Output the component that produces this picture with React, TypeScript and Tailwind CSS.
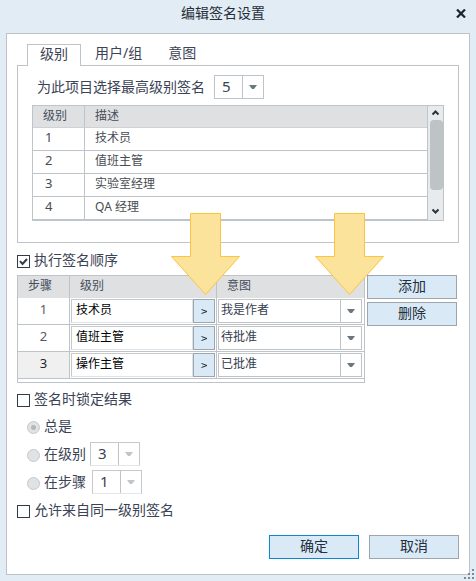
// App.tsx
import React from 'react';

const levels = [
  { id: 1, name: '技术员' },
  { id: 2, name: '值班主管' },
  { id: 3, name: '实验室经理' },
  { id: 4, name: 'QA 经理' },
];

const steps = [
  { id: 1, level: '技术员', intent: '我是作者' },
  { id: 2, level: '值班主管', intent: '待批准' },
  { id: 3, level: '操作主管', intent: '已批准' },
];

const Caret: React.FC<{ className: string }> = ({ className }) => (
  <svg width="8" height="4" viewBox="0 0 8 4" className={className}>
    <path d="M0 0h8L5 4H3z" fill="currentColor" />
  </svg>
);

interface NumberSelectProps {
  value: number;
  disabled?: boolean;
}

const NumberSelect: React.FC<NumberSelectProps> = ({ value, disabled }) => (
  <div
    className={
      disabled
        ? 'flex h-6 w-[50px] border border-[#c6cacd] border-b-[#e4e6e8] bg-white'
        : 'flex h-6 w-[50px] border border-[#bec4c7] bg-white'
    }
  >
    <span className="w-[27px] pl-[7px] text-[15px] leading-[21px]">{value}</span>
    <span className="flex flex-1 items-center justify-center border-l border-[#bec4c7]">
      <Caret className={disabled ? 'text-[#c0c5c9]' : 'text-[#6b777e]'} />
    </span>
  </div>
);

const Checkbox: React.FC<{ checked?: boolean; label: string }> = ({ checked, label }) => (
  <label className="flex h-[13px] items-center">
    <span className="flex size-[13px] items-center justify-center border border-[#343b48] bg-white">
      {checked && (
        <svg width="9" height="8" viewBox="0 0 9 8">
          <path d="M1 3.2 3.5 6 8 1" fill="none" stroke="#343b48" strokeWidth="2" />
        </svg>
      )}
    </span>
    <span className="ml-1 -mt-[3px] text-[14px] leading-4">{label}</span>
  </label>
);

const Radio: React.FC<{ checked?: boolean; label: string }> = ({ checked, label }) => (
  <label className="flex h-[13px] items-center">
    <span className="flex size-[13px] items-center justify-center rounded-full border border-[#c5c9cc] bg-[#e0e2e4]">
      {checked && <span className="size-[5px] rounded-full bg-[#b4b8bb]" />}
    </span>
    <span className="ml-1 -mt-[4px] text-[14px] leading-4">{label}</span>
  </label>
);

const Button: React.FC<{ primary?: boolean; children: React.ReactNode }> = ({ primary, children }) => (
  <button
    className={
      primary
        ? 'h-6 w-[90px] border border-[#0f87d0] bg-[#d9eaf6] pb-[2px] text-[14px] leading-[20px] text-[#242e3c]'
        : 'h-6 w-[90px] border border-[#9da6af] bg-[#d9eaf6] pb-[2px] text-[14px] leading-[20px] text-[#242e3c]'
    }
  >
    {children}
  </button>
);

const Arrow: React.FC<{ className: string }> = ({ className }) => (
  <svg width="71" height="83" viewBox="0 0 71 83" className={className}>
    <path d="M20.5.5h30v43h19L35.5 81.5 1.5 43.5h19z" fill="#fce39b" stroke="#fcc43f" />
  </svg>
);

const LevelTable = () => (
  <div className="ml-[14px] mt-[6px] flex h-[116px] w-[412px] border border-[#bec4c7] text-[12px] text-[#484c52]">
    <div className="w-[394px]">
      <div className="flex h-[22px] border-b border-[#cfd2d4] bg-[#dfe0e2] text-[#454c5b]">
        <span className="w-[52px] border-r border-[#bec4c7] pl-[10px] leading-[19px]">级别</span>
        <span className="pl-[10px] leading-[19px]">描述</span>
      </div>
      {levels.map((level) => (
        <div key={level.id} className="flex h-[23px] border-b border-[#bec4c7]">
          <span className="w-[52px] border-r border-[#bec4c7] pl-3 text-[13px] leading-[19px]">{level.id}</span>
          <span className="pl-[10px] leading-[20px]">{level.name}</span>
        </div>
      ))}
    </div>
    <div className="flex flex-1 flex-col items-end border-l border-[#bec4c7] bg-[#e7ebee]">
      <svg width="15" height="14" viewBox="0 0 15 14">
        <path d="m4.5 8.5 3-3 3 3" fill="none" stroke="#2e3338" strokeWidth="2" />
      </svg>
      <span className="h-[70px] w-[13px] rounded-[4px] bg-[#bec3c6]" />
      <svg width="15" height="30" viewBox="0 0 15 30">
        <path d="m4.5 19.5 3 3 3-3" fill="none" stroke="#2e3338" strokeWidth="2" />
      </svg>
    </div>
  </div>
);

const StepTable = () => (
  <div className="h-[108px] w-[348px] border border-[#bec4c7] text-[12px]">
    <div className="flex h-[22px] bg-[#dfe0e2] leading-[19px] text-[#454c5b]">
      <span className="w-[52px] border-r border-[#bec4c7] pl-[10px]">步骤</span>
      <span className="w-[147px] border-r border-[#bec4c7] pl-[10px]">级别</span>
      <span className="pl-[10px]">意图</span>
    </div>
    {steps.map((step) => (
      <div key={step.id} className="flex h-[27px] border-b border-[#bec4c7]">
        <span
          className={
            step.id === 3
              ? 'w-[52px] border-r border-[#bec4c7] bg-[#f0f0f0] text-center text-[13px] leading-[23px] text-[#20242b]'
              : 'w-[52px] border-r border-[#bec4c7] text-center text-[13px] leading-[23px] text-[#555a61]'
          }
        >
          {step.id}
        </span>
        <div className="flex w-[147px] border-r border-[#bec4c7] py-px pl-px pr-px">
          <span className="h-6 flex-1 border border-[#e0e3e5] border-l-[#c6cacd] border-t-[#c6cacd] pl-1 leading-[20px] text-black">
            {step.level}
          </span>
          <button className="flex h-6 w-[22px] items-center justify-center border border-[#9da6af] bg-[#d9eaf6]">
            <svg width="7" height="5" viewBox="0 0 7 5">
              <path d="M.5.5 6 2.5.5 4.5" fill="none" stroke="#242e3c" />
            </svg>
          </button>
        </div>
        <div className="flex flex-1 py-px pl-px pr-[2px]">
          <span className="h-6 flex-1 border border-[#bec4c7] pl-[2px] leading-[20px] text-[#343d4e]">{step.intent}</span>
          <span className="flex h-6 w-[21px] items-center justify-center border-y border-r border-[#bec4c7]">
            <Caret className="text-[#6b777e]" />
          </span>
        </div>
      </div>
    ))}
  </div>
);

const App: React.FC = () => {
  return (
    <div className="relative h-[581px] w-[476px] overflow-hidden bg-[#e1ecf4] px-[6px] font-['Noto_Sans','Noto_Sans_CJK_SC',sans-serif] text-[#3b4355]">
      <header className="flex h-[33px] items-center justify-center pb-[7px] pr-[30px]">
        <h1 className="text-[14px] leading-5 text-[#262e3a]">编辑签名设置</h1>
        <svg width="10" height="9" viewBox="0 0 10 9" className="absolute left-[456px] top-[9px]">
          <path d="m1 .5 8 8m0-8-8 8" fill="none" stroke="#1c2430" strokeWidth="2.2" />
        </svg>
      </header>

      <main className="flex h-[542px] w-[464px] flex-col border border-[#bcc4cb] bg-white px-[10px] pt-[10px]">
        <nav className="relative z-10 -mb-px ml-[10px] flex h-[22px] shrink-0 text-[14px] leading-[18px]">
          <span className="w-[54px] border border-b-0 border-[#bec4c7] bg-white pl-3">级别</span>
          <span className="pl-[14px]">用户/组</span>
          <span className="ml-[26px]">意图</span>
        </nav>
        <section className="h-[178px] w-[442px] shrink-0 border border-[#bec4c7] pt-[9px]">
          <div className="flex pl-5">
            <span className="-ml-px w-[177px] text-[14px] leading-[24px]">为此项目选择最高级别签名</span>
            <NumberSelect value={5} />
          </div>
          <LevelTable />
        </section>

        <div className="mt-3">
          <Checkbox checked label="执行签名顺序" />
        </div>
        <div className="mt-[7px] flex gap-[2px]">
          <StepTable />
          <div className="flex flex-col gap-[3px]">
            <Button>添加</Button>
            <Button>删除</Button>
          </div>
        </div>

        <div className="mt-[11px]">
          <Checkbox label="签名时锁定结果" />
        </div>
        <div className="ml-[10px] mt-[14px]">
          <Radio checked label="总是" />
          <div className="mt-2 flex h-6 items-center gap-1">
            <div className="mt-[3px]">
              <Radio label="在级别" />
            </div>
            <NumberSelect value={3} disabled />
          </div>
          <div className="mt-1 flex h-6 items-center gap-[6px]">
            <div className="mt-[3px]">
              <Radio label="在步骤" />
            </div>
            <NumberSelect value={1} disabled />
          </div>
        </div>
        <div className="mt-[11px]">
          <Checkbox label="允许来自同一级别签名" />
        </div>

        <footer className="mt-auto mb-[15px] flex justify-end gap-[10px]">
          <Button primary>确定</Button>
          <Button>取消</Button>
        </footer>
      </main>

      {/* callout arrows over the step table */}
      <Arrow className="absolute left-[170px] top-[213px]" />
      <Arrow className="absolute left-[314px] top-[213px]" />

      {/* resize grip */}
      <svg width="10" height="10" viewBox="0 0 10 10" fill="#7d8798" className="absolute left-[464px] top-[569px]">
        <path d="M8 0h2v2H8zM4 4h2v2H4zM8 4h2v2H8zM0 8h2v2H0zM4 8h2v2H4zM8 8h2v2H8z" />
      </svg>
    </div>
  );
};

export default App;
